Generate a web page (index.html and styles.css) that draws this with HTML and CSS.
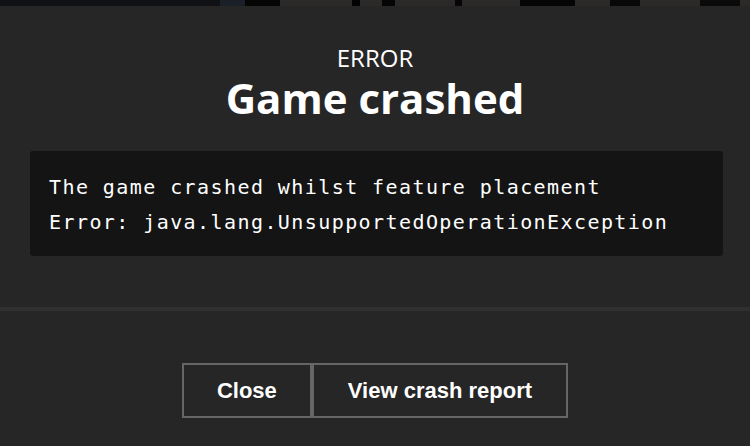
FILE: index.html
```html
<!DOCTYPE html>
<html>
<head>
<meta charset="utf-8">
<link rel="stylesheet" href="styles.css">
</head>
<body>
<div class="backdrop"></div>
<div class="modal">
  <div class="header">
    <div class="kicker">ERROR</div>
    <h1 class="title">Game crashed</h1>
  </div>
  <pre class="code">The game crashed whilst feature placement
Error: java.lang.UnsupportedOperationException</pre>
  <div class="divider"></div>
  <div class="actions">
    <button class="btn btn-close">Close</button>
    <button class="btn btn-report">View crash report</button>
  </div>
</div>
</body>
</html>
```

FILE: styles.css
```css
html, body {
  margin: 0;
  padding: 0;
  background: #262626;
  height: 100%;
  overflow: hidden;
}
.backdrop {
  height: 6px;
  background: linear-gradient(90deg,
    #0f1115 0, #0f1115 220px,
    #1b1f27 220px, #1b1f27 245px,
    #050506 245px, #050506 280px,
    #2b2a28 280px, #2b2a28 352px,
    #030303 352px, #030303 360px,
    #2b2a28 360px, #2b2a28 382px,
    #050505 382px, #050505 395px,
    #2b2a28 395px, #2b2a28 455px,
    #060606 455px, #060606 462px,
    #2b2a28 462px, #2b2a28 520px,
    #050505 520px, #050505 575px,
    #2b2a28 575px, #2b2a28 610px,
    #080808 610px, #080808 640px,
    #2b2a28 640px, #2b2a28 700px,
    #0a0a0a 700px, #0a0a0a 740px,
    #2b2a28 740px);
}
.modal {
  background: #262626;
  color: #ffffff;
}
.header {
  padding-top: 37px;
  text-align: center;
  font-family: "Open Sans", "Noto Sans", sans-serif;
}
.kicker {
  font-size: 24px;
  line-height: 30px;
  font-weight: 400;
}
.title {
  margin: 0;
  font-size: 42px;
  line-height: 50px;
  font-weight: 700;
}
.code {
  margin: 28px 27px 0 30px;
  padding: 19px 20px 16px 19px;
  background: #141414;
  border-radius: 3px;
  font-family: "DejaVu Sans Mono", monospace;
  font-size: 20px;
  line-height: 35px;
  letter-spacing: 1.42px;
  color: #ffffff;
  white-space: pre;
  overflow: hidden;
}
.divider {
  margin-top: 51px;
  height: 4px;
  background: #303030;
}
.actions {
  display: flex;
  justify-content: center;
  padding-top: 52px;
}
.btn {
  height: 55px;
  padding: 0 33px;
  background: transparent;
  border: 2px solid #666666;
  color: #ffffff;
  font-family: "Liberation Sans", Arial, sans-serif;
  font-size: 22px;
  font-weight: 700;
  cursor: pointer;
}
.btn-report {
  padding: 0 34px;
}
```
